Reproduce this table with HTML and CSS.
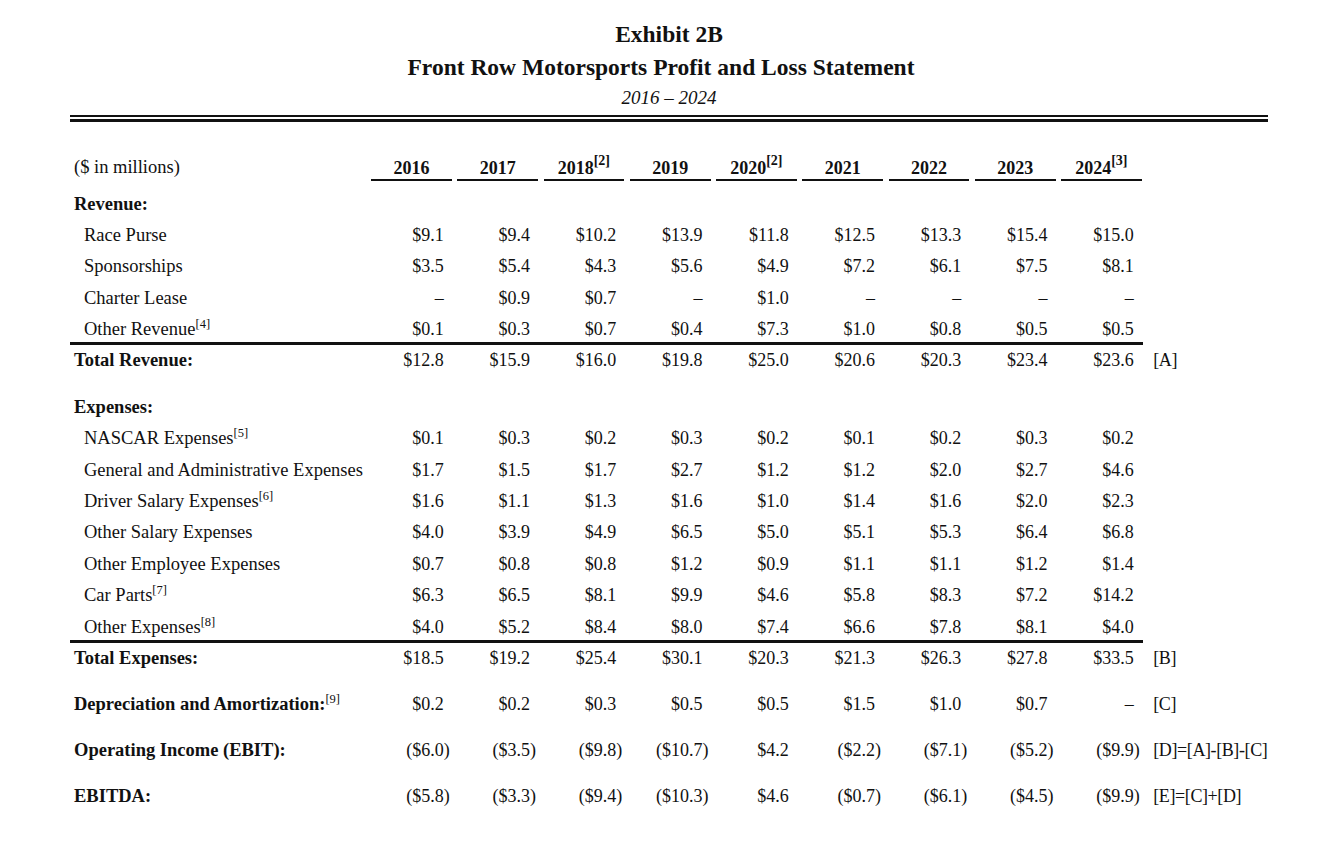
FILE: index.html
```html
<!DOCTYPE html>
<html lang="en">
<head>
<meta charset="utf-8">
<title>Exhibit 2B</title>
<link rel="stylesheet" href="styles.css">
</head>
<body>
<div class="page">
  <header class="titles">
    <h1 class="t1">Exhibit 2B</h1>
    <h2 class="t2">Front Row Motorsports Profit and Loss Statement</h2>
    <p class="t3">2016 – 2024</p>
  </header>
  <div class="double-rule"></div>

  <div class="row head">
    <div class="label plain">($ in millions)</div>
    <div class="yr"><span>2016</span></div>
    <div class="yr"><span>2017</span></div>
    <div class="yr"><span>2018<sup class="sup">[2]</sup></span></div>
    <div class="yr"><span>2019</span></div>
    <div class="yr"><span>2020<sup class="sup">[2]</sup></span></div>
    <div class="yr"><span>2021</span></div>
    <div class="yr"><span>2022</span></div>
    <div class="yr"><span>2023</span></div>
    <div class="yr"><span>2024<sup class="sup">[3]</sup></span></div>
  </div>

  <div class="row">
    <div class="label bold">Revenue:</div>
  </div>
  <div class="row">
    <div class="label item">Race Purse</div>
    <div class="num">$9.1</div><div class="num">$9.4</div><div class="num">$10.2</div><div class="num">$13.9</div><div class="num">$11.8</div><div class="num">$12.5</div><div class="num">$13.3</div><div class="num">$15.4</div><div class="num">$15.0</div>
  </div>
  <div class="row">
    <div class="label item">Sponsorships</div>
    <div class="num">$3.5</div><div class="num">$5.4</div><div class="num">$4.3</div><div class="num">$5.6</div><div class="num">$4.9</div><div class="num">$7.2</div><div class="num">$6.1</div><div class="num">$7.5</div><div class="num">$8.1</div>
  </div>
  <div class="row">
    <div class="label item">Charter Lease</div>
    <div class="num">–</div><div class="num">$0.9</div><div class="num">$0.7</div><div class="num">–</div><div class="num">$1.0</div><div class="num">–</div><div class="num">–</div><div class="num">–</div><div class="num">–</div>
  </div>
  <div class="row ruled">
    <div class="label item">Other Revenue<sup class="sup">[4]</sup></div>
    <div class="num">$0.1</div><div class="num">$0.3</div><div class="num">$0.7</div><div class="num">$0.4</div><div class="num">$7.3</div><div class="num">$1.0</div><div class="num">$0.8</div><div class="num">$0.5</div><div class="num">$0.5</div>
  </div>
  <div class="row">
    <div class="label bold">Total Revenue:</div>
    <div class="num">$12.8</div><div class="num">$15.9</div><div class="num">$16.0</div><div class="num">$19.8</div><div class="num">$25.0</div><div class="num">$20.6</div><div class="num">$20.3</div><div class="num">$23.4</div><div class="num">$23.6</div>
    <div class="note">[A]</div>
  </div>

  <div class="row gap">
    <div class="label bold">Expenses:</div>
  </div>
  <div class="row">
    <div class="label item">NASCAR Expenses<sup class="sup">[5]</sup></div>
    <div class="num">$0.1</div><div class="num">$0.3</div><div class="num">$0.2</div><div class="num">$0.3</div><div class="num">$0.2</div><div class="num">$0.1</div><div class="num">$0.2</div><div class="num">$0.3</div><div class="num">$0.2</div>
  </div>
  <div class="row">
    <div class="label item">General and Administrative Expenses</div>
    <div class="num">$1.7</div><div class="num">$1.5</div><div class="num">$1.7</div><div class="num">$2.7</div><div class="num">$1.2</div><div class="num">$1.2</div><div class="num">$2.0</div><div class="num">$2.7</div><div class="num">$4.6</div>
  </div>
  <div class="row">
    <div class="label item">Driver Salary Expenses<sup class="sup">[6]</sup></div>
    <div class="num">$1.6</div><div class="num">$1.1</div><div class="num">$1.3</div><div class="num">$1.6</div><div class="num">$1.0</div><div class="num">$1.4</div><div class="num">$1.6</div><div class="num">$2.0</div><div class="num">$2.3</div>
  </div>
  <div class="row">
    <div class="label item">Other Salary Expenses</div>
    <div class="num">$4.0</div><div class="num">$3.9</div><div class="num">$4.9</div><div class="num">$6.5</div><div class="num">$5.0</div><div class="num">$5.1</div><div class="num">$5.3</div><div class="num">$6.4</div><div class="num">$6.8</div>
  </div>
  <div class="row">
    <div class="label item">Other Employee Expenses</div>
    <div class="num">$0.7</div><div class="num">$0.8</div><div class="num">$0.8</div><div class="num">$1.2</div><div class="num">$0.9</div><div class="num">$1.1</div><div class="num">$1.1</div><div class="num">$1.2</div><div class="num">$1.4</div>
  </div>
  <div class="row">
    <div class="label item">Car Parts<sup class="sup">[7]</sup></div>
    <div class="num">$6.3</div><div class="num">$6.5</div><div class="num">$8.1</div><div class="num">$9.9</div><div class="num">$4.6</div><div class="num">$5.8</div><div class="num">$8.3</div><div class="num">$7.2</div><div class="num">$14.2</div>
  </div>
  <div class="row ruled">
    <div class="label item">Other Expenses<sup class="sup">[8]</sup></div>
    <div class="num">$4.0</div><div class="num">$5.2</div><div class="num">$8.4</div><div class="num">$8.0</div><div class="num">$7.4</div><div class="num">$6.6</div><div class="num">$7.8</div><div class="num">$8.1</div><div class="num">$4.0</div>
  </div>
  <div class="row">
    <div class="label bold">Total Expenses:</div>
    <div class="num">$18.5</div><div class="num">$19.2</div><div class="num">$25.4</div><div class="num">$30.1</div><div class="num">$20.3</div><div class="num">$21.3</div><div class="num">$26.3</div><div class="num">$27.8</div><div class="num">$33.5</div>
    <div class="note">[B]</div>
  </div>

  <div class="row gap">
    <div class="label bold">Depreciation and Amortization:<sup class="sup">[9]</sup></div>
    <div class="num">$0.2</div><div class="num">$0.2</div><div class="num">$0.3</div><div class="num">$0.5</div><div class="num">$0.5</div><div class="num">$1.5</div><div class="num">$1.0</div><div class="num">$0.7</div><div class="num">–</div>
    <div class="note">[C]</div>
  </div>
  <div class="row gap tight">
    <div class="label bold">Operating Income (EBIT):</div>
    <div class="num">($6.0<span class="paren">)</span></div><div class="num">($3.5<span class="paren">)</span></div><div class="num">($9.8<span class="paren">)</span></div><div class="num">($10.7<span class="paren">)</span></div><div class="num">$4.2</div><div class="num">($2.2<span class="paren">)</span></div><div class="num">($7.1<span class="paren">)</span></div><div class="num">($5.2<span class="paren">)</span></div><div class="num">($9.9<span class="paren">)</span></div>
    <div class="note">[D]=[A]-[B]-[C]</div>
  </div>
  <div class="row gap">
    <div class="label bold">EBITDA:</div>
    <div class="num">($5.8<span class="paren">)</span></div><div class="num">($3.3<span class="paren">)</span></div><div class="num">($9.4<span class="paren">)</span></div><div class="num">($10.3<span class="paren">)</span></div><div class="num">$4.6</div><div class="num">($0.7<span class="paren">)</span></div><div class="num">($6.1<span class="paren">)</span></div><div class="num">($4.5<span class="paren">)</span></div><div class="num">($9.9<span class="paren">)</span></div>
    <div class="note">[E]=[C]+[D]</div>
  </div>
</div>
</body>
</html>
```

FILE: styles.css
```css
* { box-sizing: border-box; }

body {
  margin: 0;
  background: #ffffff;
  color: #111111;
  font-family: "Liberation Serif", "Times New Roman", serif;
}

.page {
  margin-left: 70px;
  width: 1198px;
  padding-top: 18px;
}

.t1,
.t2 {
  margin: 0;
  font-size: 23.5px;
  line-height: 33px;
  font-weight: bold;
  text-align: center;
}

.t2 {
  padding-right: 16px;
}

.t3 {
  margin: 0;
  font-size: 19px;
  line-height: 28px;
  font-style: italic;
  text-align: center;
}

.double-rule {
  margin-top: 3px;
  height: 7px;
  border-top: 2px solid #111;
  border-bottom: 3px solid #111;
}

.row {
  display: grid;
  grid-template-columns: 299px repeat(9, 86.25px) 1fr;
  height: 31.4px;
  align-items: center;
  font-size: 18px;
  line-height: 31.4px;
}

.row.head {
  height: 59px;
  align-items: end;
  margin-bottom: 7.5px;
}

.row.gap {
  margin-top: 15px;
}

.row.gap.tight {
  margin-top: 14px;
}

.row.ruled {
  background: linear-gradient(#111, #111) left bottom / 1073px 3px no-repeat;
}

.label {
  grid-column: 1;
  white-space: nowrap;
  font-size: 18.5px;
}

.label.bold {
  font-weight: bold;
  padding-left: 4px;
}

.label.bold .sup {
  font-weight: normal;
}

.label.item {
  padding-left: 14px;
}

.label.plain {
  padding-left: 4px;
  line-height: 22px;
  padding-bottom: 3px;
}

.yr span {
  display: block;
  margin: 0 3.5px 0 2px;
  border-bottom: 2px solid #111;
  text-align: center;
  font-weight: bold;
  line-height: 22px;
}

.sup {
  font-size: 12.5px;
  line-height: 0;
  vertical-align: 7px;
}

.yr .sup {
  font-size: 14px;
  vertical-align: 9px;
}

.num {
  text-align: right;
  padding-right: 11.5px;
  white-space: nowrap;
}

.paren {
  margin-right: -0.333em;
}

.note {
  grid-column: 11;
  padding-left: 8px;
  white-space: nowrap;
  letter-spacing: -0.4px;
}
```
